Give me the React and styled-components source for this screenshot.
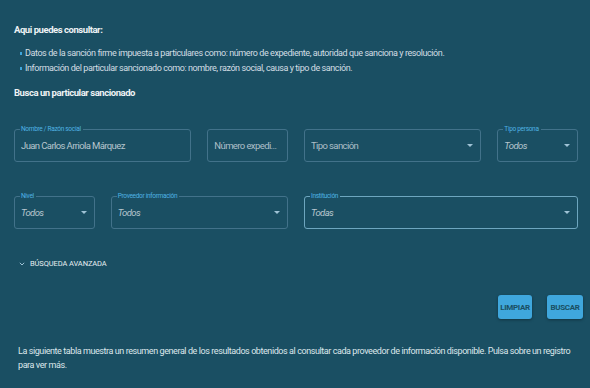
import React from "react";
import styled, { createGlobalStyle } from "styled-components";

const BG = "#1a4f63";
const FONT = `"Roboto", "Liberation Sans", Arial, sans-serif`;

const Global = createGlobalStyle`
  html, body { margin: 0; padding: 0; background: ${BG}; }
  body { font-family: ${FONT}; }
  * { box-sizing: border-box; }
`;

const Page = styled.div`
  width: 590px;
  height: 388px;
  overflow: hidden;
  padding: 23px 12px 0 14px;
  background: ${BG};
  color: #d9e4e9;
`;

const Heading = styled.h2`
  margin: 0;
  font-size: 9.5px;
  line-height: 14px;
  font-weight: 700;
  letter-spacing: -0.45px;
  color: #eef3f5;
`;

const List = styled.ul`
  list-style: none;
  margin: 9px 0 0 0;
  padding: 0 0 0 6px;
`;

const Item = styled.li`
  position: relative;
  padding-left: 5px;
  font-size: 9px;
  line-height: 15px;
  letter-spacing: -0.42px;
  color: #d3dee4;
  &::before {
    content: "";
    position: absolute;
    left: 0;
    top: 6px;
    width: 2px;
    height: 3px;
    background: #3ea6dc;
  }
`;

const SubHeading = styled(Heading)`
  margin-top: 10px;
`;

const Grid = styled.div`
  display: grid;
  grid-template-columns: repeat(12, 1fr);
  column-gap: 16px;
  row-gap: 34px;
  width: 564px;
  margin-top: 29px;
`;

const Field = styled.div`
  position: relative;
  grid-column: span ${(p) => p.$span};
  height: 33px;
  border: 1px solid ${(p) => (p.$focused ? "#6ea6bf" : "#42728a")};
  border-radius: 3px;
  display: flex;
  align-items: center;
  padding: 0 7px 0 6px;
`;

const Label = styled.span`
  position: absolute;
  left: 5px;
  top: -5px;
  padding: 0 2px 0 1px;
  background: ${BG};
  font-size: 6.5px;
  line-height: 9px;
  letter-spacing: -0.3px;
  color: #4fb3e3;
  white-space: nowrap;
`;

const Value = styled.span`
  flex: 1;
  font-size: 9.5px;
  letter-spacing: -0.6px;
  color: ${(p) => (p.$placeholder ? "#aebfc8" : "#b7c6ce")};
  font-style: ${(p) => (p.$italic ? "italic" : "normal")};
  white-space: nowrap;
  overflow: hidden;
  text-overflow: ellipsis;
`;

const Arrow = styled.span`
  width: 0;
  height: 0;
  border-left: 3px solid transparent;
  border-right: 3px solid transparent;
  border-top: 3px solid #9fc3d6;
  margin-left: 4px;
`;

const Advanced = styled.div`
  display: flex;
  align-items: center;
  gap: 5px;
  margin-top: 30px;
  padding-left: 5px;
  font-size: 7.5px;
  color: #e6eef2;
  letter-spacing: -0.1px;
`;

const Actions = styled.div`
  display: flex;
  justify-content: flex-end;
  gap: 15px;
  margin-top: 27px;
  margin-right: -5px;
`;

const Button = styled.button`
  height: 24px;
  width: ${(p) => p.$w}px;
  padding: 0;
  border: none;
  border-radius: 3px;
  background: #3fa7dd;
  color: #1a4f63;
  font-family: ${FONT};
  font-size: 8px;
  font-weight: 700;
  letter-spacing: -0.3px;
  box-shadow: 0 1px 3px rgba(0, 0, 0, 0.35);
  cursor: pointer;
`;

const Note = styled.p`
  margin: 25px 0 0 4px;
  font-size: 9px;
  line-height: 14px;
  letter-spacing: -0.42px;
  color: #dde7eb;
  width: 560px;
`;

function SelectField({ span, label, value, italic, placeholder, focused }) {
  return (
    <Field $span={span} $focused={focused}>
      {label && <Label>{label}</Label>}
      <Value $italic={italic} $placeholder={placeholder}>{value}</Value>
      <Arrow />
    </Field>
  );
}

export default function App() {
  return (
    <>
      <Global />
      <Page>
        <Heading>Aqui puedes consultar:</Heading>
        <List>
          <Item>
            Datos de la sanción firme impuesta a particulares como: número de expediente, autoridad que sanciona y resolución.
          </Item>
          <Item>
            Información del particular sancionado como: nombre, razón social, causa y tipo de sanción.
          </Item>
        </List>
        <SubHeading>Busca un particular sancionado</SubHeading>
        <Grid>
          <Field $span={4}>
            <Label>Nombre / Razón social</Label>
            <Value>Juan Carlos Arriola Márquez</Value>
          </Field>
          <Field $span={2}>
            <Value $placeholder>Número expediente</Value>
          </Field>
          <SelectField span={4} value="Tipo sanción" placeholder />
          <SelectField span={2} label="Tipo persona" value="Todos" italic />
          <SelectField span={2} label="Nivel" value="Todos" italic />
          <SelectField span={4} label="Proveedor información" value="Todos" italic />
          <SelectField span={6} label="Institución" value="Todas" italic focused />
        </Grid>
        <Advanced>
          <svg width="6" height="4" viewBox="0 0 6 4">
            <path d="M0.8 0.8 L3 3 L5.2 0.8" fill="none" stroke="#9fc3d6" strokeWidth="1" />
          </svg>
          BÚSQUEDA AVANZADA
        </Advanced>
        <Actions>
          <Button $w={34}>LIMPIAR</Button>
          <Button $w={36}>BUSCAR</Button>
        </Actions>
        <Note>
          La siguiente tabla muestra un resumen general de los resultados obtenidos al consultar cada proveedor de información disponible. Pulsa sobre un registro para ver más.
        </Note>
      </Page>
    </>
  );
}
